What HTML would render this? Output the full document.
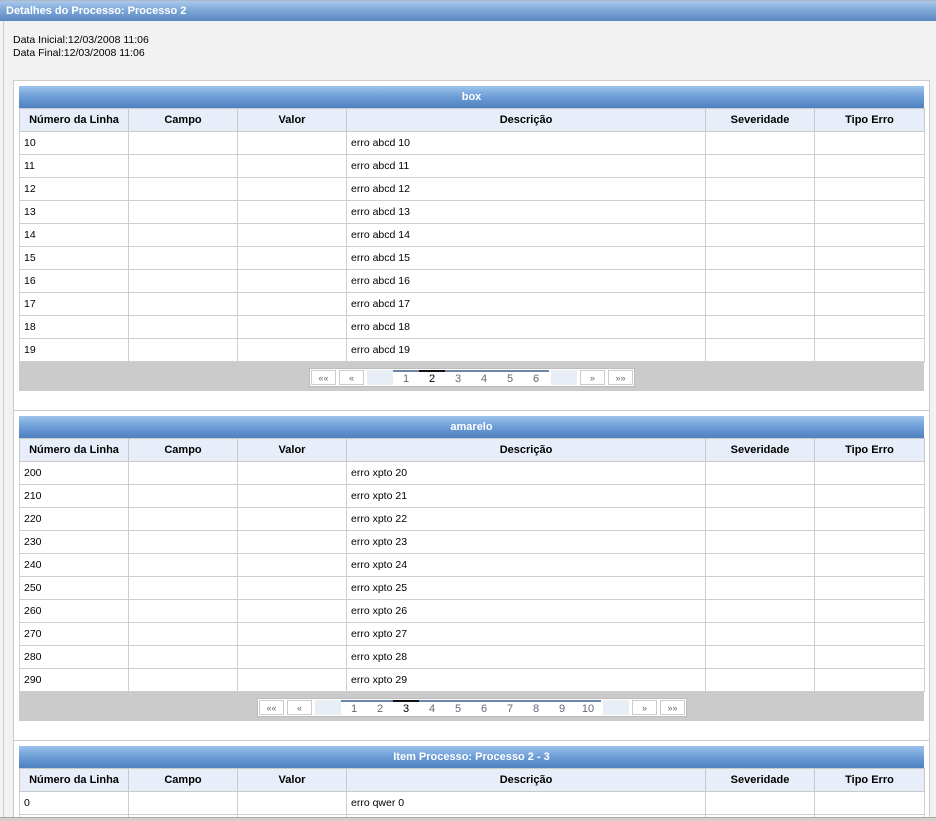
<!DOCTYPE html>
<html style="width:936px;height:821px;overflow:hidden"><head><meta charset="utf-8"><style>
*{box-sizing:border-box;margin:0;padding:0}
body{width:936px;height:821px;overflow:hidden;background:#f2f2f2;font-family:"Liberation Sans",Arial,sans-serif;font-size:11px;color:#000;position:relative}
.top{position:absolute;left:0;top:0;width:936px;height:21px;background:linear-gradient(#a9c8ea,#7aa5d6 50%,#5b88c2);border-top:1px solid #b0b8c8;color:#fff;font-weight:bold;font-size:11px;line-height:20px;padding-left:6px}
.info{position:absolute;left:13px;top:34px;line-height:13px;font-size:10.5px}
.leftb{position:absolute;left:3px;top:21px;width:1px;height:800px;background:#ccc}
.panel{position:absolute;left:13px;top:80px;width:917px;height:737px;background:#fff;border:1px solid #ccc;border-bottom:none;overflow:hidden}
.blk{position:absolute;left:5px;width:906px}
.sep{position:absolute;left:0;width:915px;height:1px;background:#ccc}
table{border-collapse:collapse;width:905px;table-layout:fixed}
.cap{height:22px;background:linear-gradient(#9cc3ec,#6d9dd6 50%,#4f80c0);color:#fff;font-weight:bold;text-align:center;font-size:11px;line-height:22px;width:905px}
th{height:23px;background:#e8eef9;border:1px solid #c9c9c9;font-weight:bold;font-size:11px}
td{height:23px;border:1px solid #cfcfcf;padding-left:4px;font-size:10.5px}
.pg{height:29px;background:#cbcbcb;position:relative;width:905px}
.pager{position:absolute;top:6px;display:flex;background:#fff;border:1px solid #bbb;padding:1px;height:19px}
.pager span{display:block;height:15px;line-height:15px;text-align:center;font-size:11px;color:#667}
.b{width:25px;border:1px solid #ccc;margin-right:3px;font-size:9px!important}
.e{width:26px;background:#e9eef6;margin-right:0}
.n{width:26px;border-top:2px solid #6a84aa;margin-right:0}
.n.c{border-top-color:#111;color:#000!important}
</style></head><body>
<div class="top">Detalhes do Processo: Processo 2</div>
<div class="leftb"></div>
<div class="info">Data Inicial:12/03/2008 11:06<br>Data Final:12/03/2008 11:06</div>
<div class="panel">
<div class="blk" style="top:5px">
<div class="cap">box</div>
<table><colgroup><col style="width:109px"><col style="width:109px"><col style="width:109px"><col style="width:359px"><col style="width:109px"><col style="width:110px"></colgroup>
<tr><th>Número da Linha</th><th>Campo</th><th>Valor</th><th>Descrição</th><th>Severidade</th><th>Tipo Erro</th></tr>
<tr><td>10</td><td></td><td></td><td>erro abcd 10</td><td></td><td></td></tr>
<tr><td>11</td><td></td><td></td><td>erro abcd 11</td><td></td><td></td></tr>
<tr><td>12</td><td></td><td></td><td>erro abcd 12</td><td></td><td></td></tr>
<tr><td>13</td><td></td><td></td><td>erro abcd 13</td><td></td><td></td></tr>
<tr><td>14</td><td></td><td></td><td>erro abcd 14</td><td></td><td></td></tr>
<tr><td>15</td><td></td><td></td><td>erro abcd 15</td><td></td><td></td></tr>
<tr><td>16</td><td></td><td></td><td>erro abcd 16</td><td></td><td></td></tr>
<tr><td>17</td><td></td><td></td><td>erro abcd 17</td><td></td><td></td></tr>
<tr><td>18</td><td></td><td></td><td>erro abcd 18</td><td></td><td></td></tr>
<tr><td>19</td><td></td><td></td><td>erro abcd 19</td><td></td><td></td></tr>
</table>
<div class="pg"><div class="pager" style="left:290px"><span class="b">««</span><span class="b">«</span><span class="e"></span><span class="n">1</span><span class="n c">2</span><span class="n">3</span><span class="n">4</span><span class="n">5</span><span class="n">6</span><span class="e" style="margin-left:2px;margin-right:3px"></span><span class="b">»</span><span class="b" style="margin-right:0">»»</span></div></div>
</div>
<div class="sep" style="top:329px"></div>
<div class="blk" style="top:335px">
<div class="cap">amarelo</div>
<table><colgroup><col style="width:109px"><col style="width:109px"><col style="width:109px"><col style="width:359px"><col style="width:109px"><col style="width:110px"></colgroup>
<tr><th>Número da Linha</th><th>Campo</th><th>Valor</th><th>Descrição</th><th>Severidade</th><th>Tipo Erro</th></tr>
<tr><td>200</td><td></td><td></td><td>erro xpto 20</td><td></td><td></td></tr>
<tr><td>210</td><td></td><td></td><td>erro xpto 21</td><td></td><td></td></tr>
<tr><td>220</td><td></td><td></td><td>erro xpto 22</td><td></td><td></td></tr>
<tr><td>230</td><td></td><td></td><td>erro xpto 23</td><td></td><td></td></tr>
<tr><td>240</td><td></td><td></td><td>erro xpto 24</td><td></td><td></td></tr>
<tr><td>250</td><td></td><td></td><td>erro xpto 25</td><td></td><td></td></tr>
<tr><td>260</td><td></td><td></td><td>erro xpto 26</td><td></td><td></td></tr>
<tr><td>270</td><td></td><td></td><td>erro xpto 27</td><td></td><td></td></tr>
<tr><td>280</td><td></td><td></td><td>erro xpto 28</td><td></td><td></td></tr>
<tr><td>290</td><td></td><td></td><td>erro xpto 29</td><td></td><td></td></tr>
</table>
<div class="pg"><div class="pager" style="left:238px"><span class="b">««</span><span class="b">«</span><span class="e"></span><span class="n">1</span><span class="n">2</span><span class="n c">3</span><span class="n">4</span><span class="n">5</span><span class="n">6</span><span class="n">7</span><span class="n">8</span><span class="n">9</span><span class="n">10</span><span class="e" style="margin-left:2px;margin-right:3px"></span><span class="b">»</span><span class="b" style="margin-right:0">»»</span></div></div>
</div>
<div class="sep" style="top:659px"></div>
<div class="blk" style="top:665px">
<div class="cap">Item Processo: Processo 2 - 3</div>
<table><colgroup><col style="width:109px"><col style="width:109px"><col style="width:109px"><col style="width:359px"><col style="width:109px"><col style="width:110px"></colgroup>
<tr><th>Número da Linha</th><th>Campo</th><th>Valor</th><th>Descrição</th><th>Severidade</th><th>Tipo Erro</th></tr>
<tr><td>0</td><td></td><td></td><td>erro qwer 0</td><td></td><td></td></tr>
<tr><td></td><td></td><td></td><td></td><td></td><td></td></tr>
</table>
</div>
</div>
<div style="position:absolute;left:0;top:817px;width:936px;height:4px;background:#d4d0c8;border-top:1px solid #aaa"></div>
</body></html>
